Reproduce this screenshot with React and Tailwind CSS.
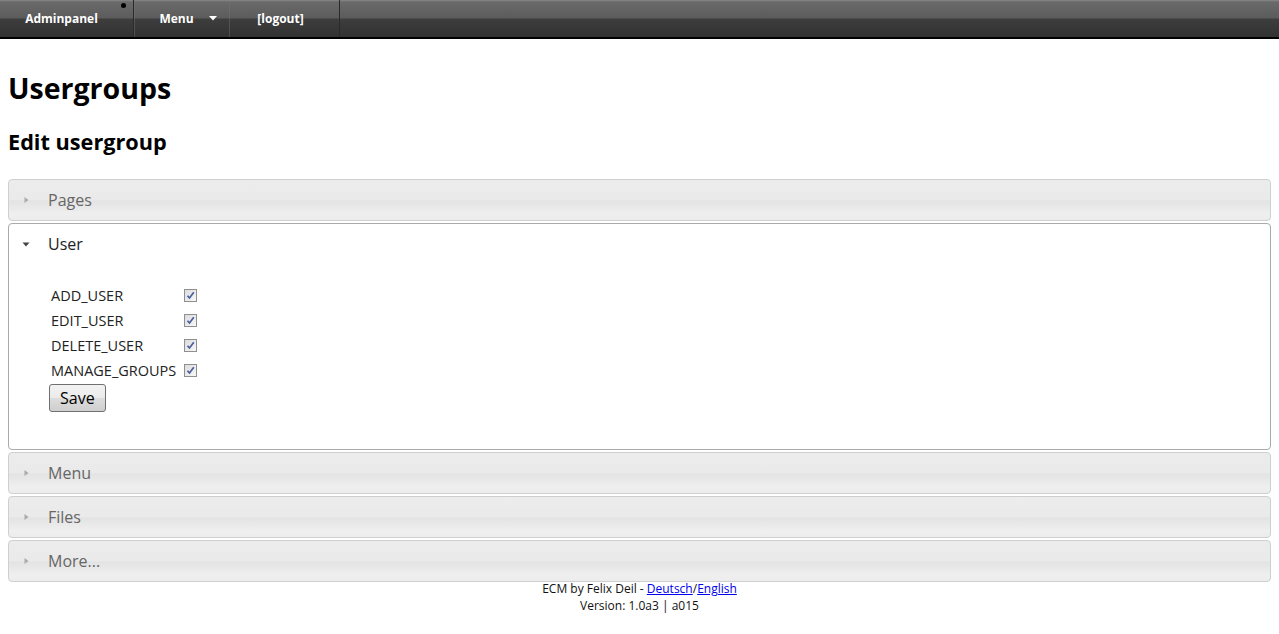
import React from "react";

const font = { fontFamily: '"Open Sans", "Noto Sans", sans-serif' };

function Arrow({ open }) {
  return (
    <svg width="8" height="8" viewBox="0 0 8 8" className="shrink-0">
      {open ? (
        <path d="M0.5 2.5 L7.5 2.5 L4 6.5 Z" fill="#444" />
      ) : (
        <path d="M2.5 1 L6.5 4 L2.5 7 Z" fill="#aaa" />
      )}
    </svg>
  );
}

function Check() {
  return (
    <span className="inline-flex h-[13px] w-[13px] items-center justify-center border border-[#8f8f8f] bg-gradient-to-br from-[#dcdcdc] to-[#f8f8f8]">
      <svg width="9" height="9" viewBox="0 0 9 9">
        <path d="M1.5 4.8 L3.5 7 L7.8 1.2" stroke="#4a5e9c" strokeWidth="1.7" fill="none" />
      </svg>
    </span>
  );
}

function Header({ title }) {
  return (
    <div className="flex h-[42px] items-center gap-[18px] rounded-[4px] border border-[#cfcfcf] bg-[linear-gradient(to_bottom,#ececec_0%,#eaeaea_50%,#e3e3e3_52%,#efefef_85%,#ececec_100%)] pl-[13px] text-[16px] text-[#666]">
      <Arrow />
      <span>{title}</span>
    </div>
  );
}

export default function App() {
  const perms = ["ADD_USER", "EDIT_USER", "DELETE_USER", "MANAGE_GROUPS"];

  return (
    <div className="min-h-screen bg-white text-black" style={font}>
      {/* top bar */}
      <div className="flex h-[39px] border-b-2 border-black bg-[linear-gradient(to_bottom,#8a8a8a_0%,#6a6a6a_5%,#5c5c5c_48%,#3d3d3d_52%,#323232_100%)] text-[12px] font-bold text-white">
        <div className="relative flex w-[134px] items-center justify-center border-r border-[#2a2a2a] pr-[10px]">
          Adminpanel
          <span className="absolute right-[7px] top-[3px] h-[5px] w-[5px] rounded-full bg-black" />
        </div>
        <div className="flex w-[96px] items-center justify-center gap-[15px] border-x border-[#777]/40 pl-[12px]">
          Menu
          <svg width="8" height="5" viewBox="0 0 8 5">
            <path d="M0 0 L8 0 L4 4.5 Z" fill="#fff" />
          </svg>
        </div>
        <div className="flex w-[110px] items-center justify-center border-r border-[#2a2a2a] pr-[8px]">
          [logout]
        </div>
      </div>

      <div className="px-2">
        <h1 className="mt-[31px] text-[28.5px] font-bold leading-[36px]">Usergroups</h1>
        <h2 className="mt-[22px] text-[21.7px] font-bold leading-[28px]">Edit usergroup</h2>

        <div className="mt-[23px] flex flex-col gap-[2px]">
          <Header title="Pages" />

          <div className="h-[227px] rounded-[4px] border border-[#aaa]">
            <div className="flex h-[40px] items-center gap-[18px] pl-[13px] text-[16px] text-[#222]">
              <Arrow open />
              <span>User</span>
            </div>
            <div className="pl-[42px] pt-[19px] text-[14.5px] text-[#222]">
              {perms.map((p) => (
                <div key={p} className="flex h-[25px] items-center">
                  <span className="w-[133px]">{p}</span>
                  <Check />
                </div>
              ))}
              <button className="ml-[-2px] mt-[1px] h-[28px] rounded-[3px] border border-[#707070] bg-[linear-gradient(to_bottom,#f2f2f2,#ebebeb_50%,#dddddd_51%,#cfcfcf)] px-[10px] text-[16px] text-black">
                Save
              </button>
            </div>
          </div>

          <Header title="Menu" />
          <Header title="Files" />
          <Header title="More..." />
        </div>

        <div className="mt-[-2px] text-center text-[12px] leading-[17px] text-[#111]">
          <div>
            ECM by Felix Deil - <a href="#" className="text-[#0000ee] underline">Deutsch</a>/
            <a href="#" className="text-[#0000ee] underline">English</a>
          </div>
          <div>Version: 1.0a3 | a015</div>
        </div>
      </div>
    </div>
  );
}
